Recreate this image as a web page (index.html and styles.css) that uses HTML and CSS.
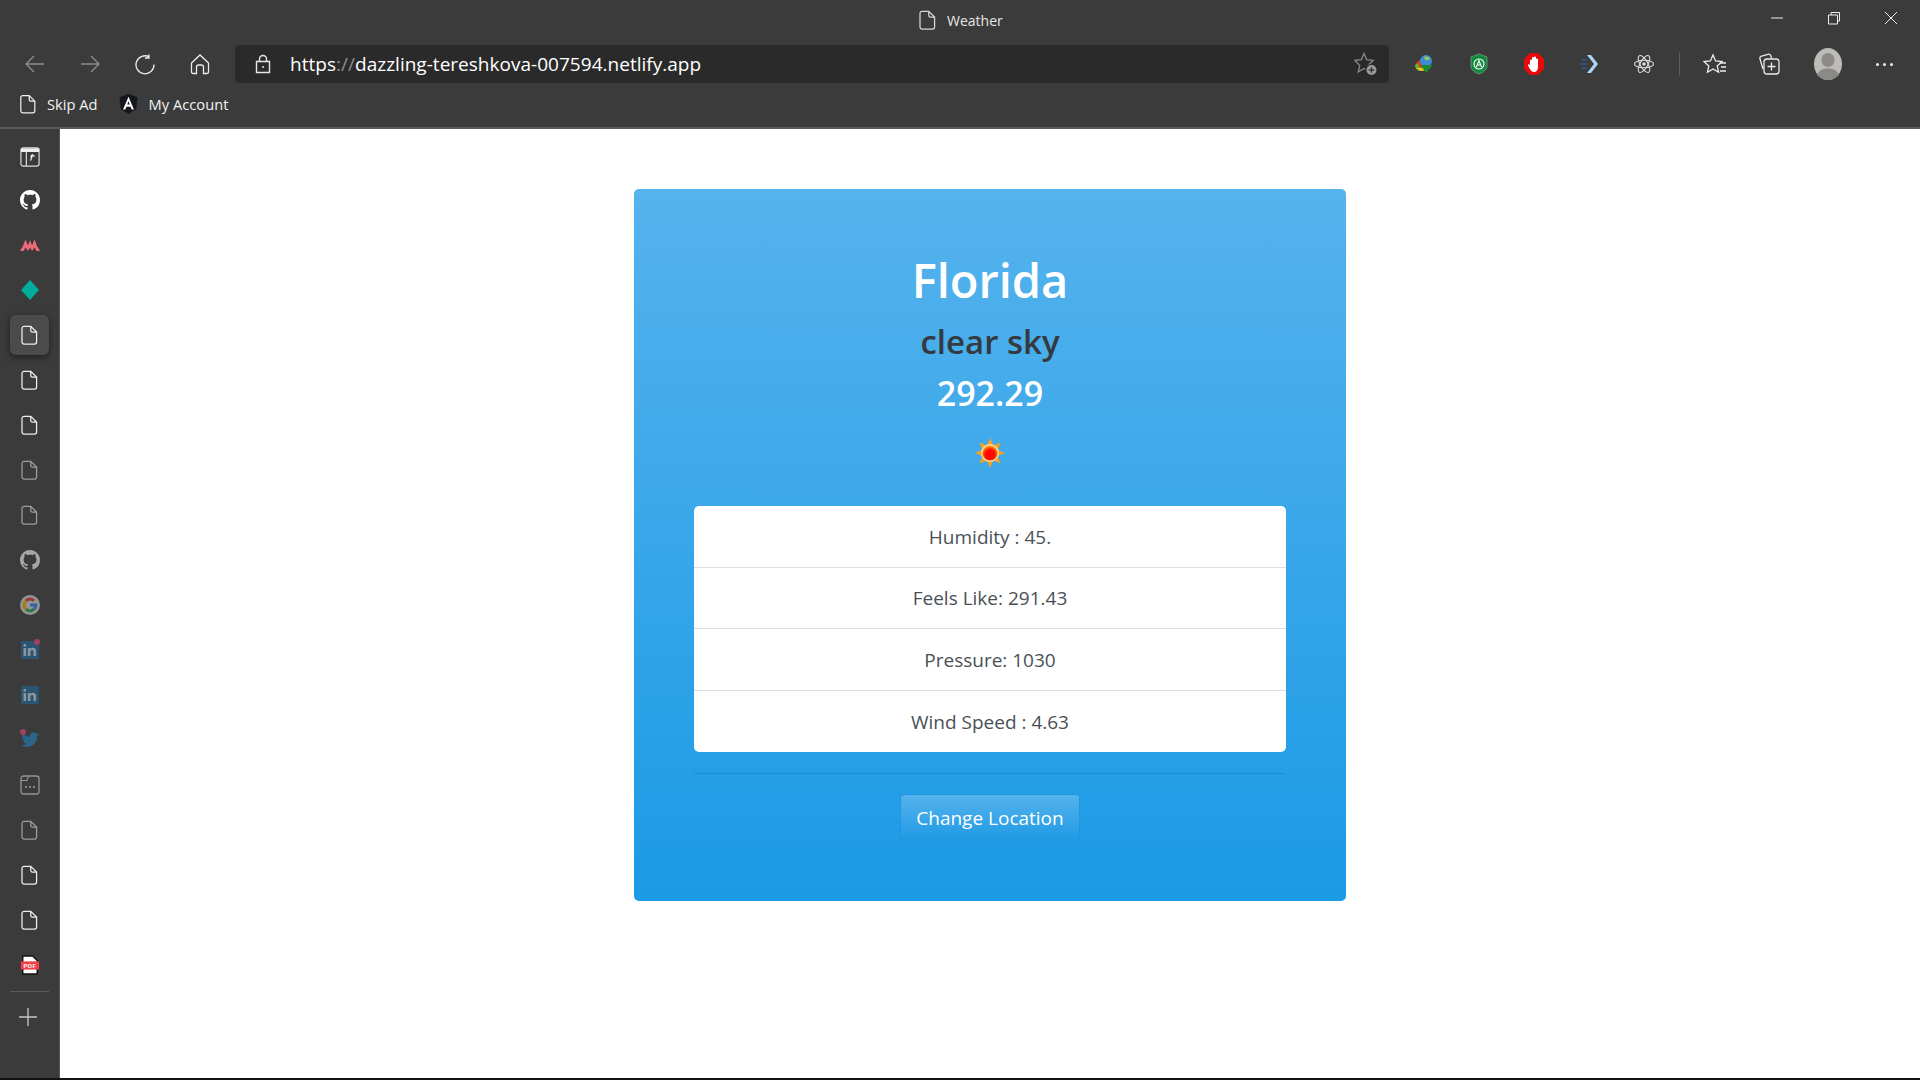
FILE: index.html
```html
<!DOCTYPE html>
<html lang="en">
<head>
<meta charset="utf-8">
<title>Weather</title>
<link rel="stylesheet" href="styles.css">
</head>
<body>
<svg class="defs" width="0" height="0">
  <defs>
    <symbol id="doc" viewBox="0 0 20 24"><path d="M3.5 1.5h8l7 7v12a2.500 2.500 0 0 1-2.500 2.500H3.500A2.500 2.500 0 0 1 1 20.500V4a2.500 2.500 0 0 1 2.500-2.500zM11.500 1.500v5a2 2 0 0 0 2 2h5" fill="none" stroke="currentColor" stroke-width="1.500"/></symbol>
    <symbol id="gh" viewBox="0 0 16 16"><path fill="currentColor" d="M8 0C3.580 0 0 3.580 0 8c0 3.540 2.290 6.530 5.470 7.590.4.070.55-.17.550-.38 0-.19-.01-.82-.01-1.490-2.010.37-2.530-.49-2.690-.94-.09-.23-.48-.94-.82-1.130-.28-.15-.68-.52-.01-.53.630-.01 1.080.58 1.230.82.720 1.210 1.870.87 2.330.66.070-.52.280-.87.510-1.070-1.780-.2-3.640-.89-3.640-3.950 0-.87.310-1.590.820-2.150-.08-.2-.36-1.020.08-2.120 0 0 .67-.21 2.200.82.640-.18 1.320-.27 2-.27s1.360.09 2 .27c1.530-1.040 2.200-.82 2.200-.82.44 1.100.160 1.920.08 2.120.51.560.82 1.270.82 2.150 0 3.070-1.870 3.750-3.650 3.950.29.250.54.730.54 1.480 0 1.070-.01 1.930-.01 2.200 0 .21.150.46.550.38A8.010 8.010 0 0 0 16 8c0-4.420-3.580-8-8-8z"/></symbol>
    <symbol id="li" viewBox="0 0 18 18"><rect width="18" height="18" fill="#1b6aa0"/><path fill="#cde" d="M2.500 7h2.600v8H2.500zM3.800 2.800a1.500 1.500 0 1 1 0 3 1.500 1.500 0 0 1 0-3zM6.800 7h2.500v1.100c.5-.8 1.400-1.300 2.600-1.300 2.400 0 3.200 1.500 3.200 3.900V15H12.500v-3.800c0-1.100-.2-2.100-1.400-2.100s-1.700 1-1.700 2.100V15H6.800z"/></symbol>
    <radialGradient id="sunfill" cx="50%" cy="60%" r="55%"><stop offset="0" stop-color="#ff0000"/><stop offset=".6" stop-color="#ff1000"/><stop offset="1" stop-color="#ffa000"/></radialGradient>
  </defs>
</svg>
<div class="app">
  <header class="chrome">
    <div class="titlebar">
      <div class="title">
        <svg class="title-doc"><use href="#doc"/></svg>
        <span>Weather</span>
      </div>
      <div class="winctl">
        <svg class="win" viewBox="0 0 14 14"><path d="M1 7h12" stroke="currentColor" fill="none"/></svg>
        <svg class="win" viewBox="0 0 14 14"><path d="M1.500 4h9v9h-9zM4 4V1.500h8.500V10H10.500" stroke="currentColor" fill="none"/></svg>
        <svg class="win" viewBox="0 0 14 14"><path d="M1 1l12 12M13 1L1 13" stroke="currentColor" fill="none"/></svg>
      </div>
    </div>
    <div class="navbar">
      <div class="navbtns">
        <svg class="nav dim" viewBox="0 0 22 22"><path d="M20 11H2M10 3l-8 8 8 8" fill="none" stroke="currentColor" stroke-width="1.300"/></svg>
        <svg class="nav dim" viewBox="0 0 22 22"><path d="M2 11h18M12 3l8 8-8 8" fill="none" stroke="currentColor" stroke-width="1.300"/></svg>
        <svg class="nav" viewBox="0 0 22 22"><path d="M15.500 3.500A9 9 0 1 0 20 11M15 1v3.500h-4" fill="none" stroke="currentColor" stroke-width="1.300" transform="translate(0 .5)"/></svg>
        <svg class="nav" viewBox="0 0 22 22"><path d="M2.500 10 11 2l8.500 8v9a1.500 1.500 0 0 1-1.500 1.500h-3.500V14a2 2 0 0 0-2-2h-3a2 2 0 0 0-2 2v6.500H4A1.500 1.500 0 0 1 2.500 19z" fill="none" stroke="currentColor" stroke-width="1.300"/></svg>
      </div>
      <div class="address">
        <svg class="lock" viewBox="0 0 16 20"><path d="M1.500 7.500h13v11h-13zM4.500 7.500V5a3.500 3.500 0 0 1 7 0v2.500" fill="none" stroke="currentColor" stroke-width="1.400"/><circle cx="8" cy="13" r="1" fill="currentColor"/></svg>
        <span class="url">https<span class="url-dim">://</span>dazzling-tereshkova-007594.netlify.app</span>
        <svg class="favadd" viewBox="0 0 24 24"><path d="M10 1.500l2.700 6.200 6.500.7-4.900 4.500 1.400 6.500L10 16.500l-5.700 3.400 1.400-6.500L.8 8.400l6.500-.7z" fill="none" stroke="#8a8a8a" stroke-width="1.300"/><circle cx="17.500" cy="18" r="6.200" fill="#2a2a2a"/><circle cx="17.500" cy="18" r="5" fill="#9a9a9a"/><path d="M17.500 15.300v5.400M14.800 18h5.400" stroke="#333" stroke-width="1.300"/></svg>
      </div>
      <div class="tools">
        <svg class="ext" viewBox="0 0 22 22"><path d="M3 12a6 6 0 0 1 6-5l-1 4 3 3-4 1z" fill="#d43a20"/><path d="M2 12c0 4 3 6 6 6l3-3-5-1-1-4z" fill="#6cb52c"/><path d="M4 15c2 3 5 4 8 2l-3-2z" fill="#f0c020"/><circle cx="13" cy="8" r="6" fill="#3a8ad8"/><path d="M11 4c3-1 5 0 6 2-2 2-5 2-6-2z" fill="#9cc84a"/><path d="M8 12h12l-7 8z" fill="#1f8a2c"/></svg>
        <svg class="ext" viewBox="0 0 22 22"><path d="M11 1l8 3v9c0 4-4 6.500-8 8-4-1.500-8-4-8-8V4z" fill="#12883b" stroke="#8cb79a" stroke-width=".6"/><circle cx="11" cy="11" r="5" fill="none" stroke="#fff" stroke-width="1.100"/><path d="M8.500 14 11 7.500l2.500 6.500M9.500 12h3" fill="none" stroke="#fff" stroke-width="1.100"/></svg>
        <svg class="ext" viewBox="0 0 22 22"><path d="M7 0h8l6 6v10l-6 6H7l-6-6V6z" fill="#e60a0a"/><path d="M7 13V7.500a1 1 0 0 1 2 0V11V5a1 1 0 0 1 2 0v6V4.500a1 1 0 0 1 2 0V11V6.500a1 1 0 0 1 2 0V14c0 3-1.500 5-4 5-2 0-3-1-4-3l-2-3.500c-.5-1 .8-1.800 1.500-.8z" fill="#fff"/></svg>
        <svg class="ext" viewBox="0 0 22 22"><path d="M9 2h4l7 9-7 9H9l7-9z" fill="#a9d4f5"/><path d="M3 6h6v1.500H3zM2 10.200h8v1.500H2zM3 14.500h6V16H3z" fill="#2d5a8a"/></svg>
        <svg class="ext ext-last" viewBox="0 0 22 22"><g fill="none" stroke="#ddd" stroke-width="1.100"><ellipse cx="11" cy="11" rx="9.500" ry="3.800"/><ellipse cx="11" cy="11" rx="9.500" ry="3.800" transform="rotate(60 11 11)"/><ellipse cx="11" cy="11" rx="9.500" ry="3.800" transform="rotate(120 11 11)"/></g><circle cx="11" cy="11" r="1.800" fill="#ddd"/></svg>
        <span class="tool-sep"></span>
        <svg class="tool tool-fav" viewBox="0 0 24 24"><path d="M10 2l2.600 6 6.400.6-4.800 4.300 1.400 6.400L10 16l-5.600 3.300 1.400-6.400L1 8.600 7.400 8z" transform="translate(0 1)" fill="none" stroke="currentColor" stroke-width="1.300"/><path d="M17 11h6M18 15h5M17 19h6" stroke="currentColor" stroke-width="1.300"/></svg>
        <svg class="tool" viewBox="0 0 24 24"><path d="M6 17 3 7c-.4-1.500.3-2.600 1.600-3L11 2.300c1.300-.3 2.300.2 2.800 1.500L14.500 6" fill="none" stroke="currentColor" stroke-width="1.300"/><rect x="7" y="7" width="15" height="15" rx="3" fill="none" stroke="currentColor" stroke-width="1.300"/><path d="M14.500 10.500v8M10.500 14.500h8" stroke="currentColor" stroke-width="1.300"/></svg>
        <span class="avatar"><svg viewBox="0 0 28 32"><ellipse cx="14" cy="16" rx="14" ry="16" fill="#bdbcb8"/><ellipse cx="14" cy="12" rx="6.500" ry="7" fill="#8c8a86"/><path d="M3 27c2-5 6-6.500 11-6.500S23 22 25 27c-3 3-7 5-11 5s-8-2-11-5z" fill="#8c8a86"/></svg></span>
        <span class="dots"><i></i><i></i><i></i></span>
      </div>
    </div>
    <div class="bookmarks">
      <div class="bm">
        <svg class="bm-doc"><use href="#doc"/></svg>
        <span>Skip Ad</span>
      </div>
      <div class="bm">
        <svg class="bm-ang" viewBox="0 0 20 22"><path d="M10 0l10 3.500-1.500 13L10 22l-8.500-5.500L0 3.500z" fill="#14171c"/><path d="M10 3 4 17h2.500l1.200-3h4.600l1.200 3H16zM8.700 11.500 10 8l1.300 3.500z" fill="#fff"/></svg>
        <span>My Account</span>
      </div>
    </div>
  </header>
  <div class="body">
    <nav class="rail">
      <div class="rail-item rail-first"><svg class="ri" viewBox="0 0 22 22"><rect x="1" y="1" width="20" height="20" rx="2.500" fill="none" stroke="#ddd" stroke-width="1.300"/><path d="M1 3.500h20" stroke="#eee" stroke-width="4"/><path d="M7 5v16" stroke="#ddd" stroke-width="1.300"/><path d="M11.500 15l2-5M11.500 11 13.500 8.500l2.500 2" fill="none" stroke="#fff" stroke-width="1.300"/></svg></div>
      <div class="rail-item"><svg class="ri ri-lg white"><use href="#gh"/></svg></div>
      <div class="rail-item"><svg class="ri" viewBox="0 0 20 12"><path d="M0 12l3-5 2.500-6.500L8 6.500 10 1l2 5.500L14.500.5 17 7l3 5h-3.500L14.500 8.500 12 12 10 8.500 8 12 5.500 8.500 3.500 12z" fill="#ef6a78"/></svg></div>
      <div class="rail-item"><svg class="ri ri-lg" viewBox="0 0 20 20"><path d="M10 0l9 10-9 10-9-10z" fill="#00ac9c"/></svg></div>
      <div class="rail-item rail-active"><svg class="ri-doc"><use href="#doc"/></svg></div>
      <div class="rail-item"><svg class="ri-doc"><use href="#doc"/></svg></div>
      <div class="rail-item"><svg class="ri-doc"><use href="#doc"/></svg></div>
      <div class="rail-item faded"><svg class="ri-doc"><use href="#doc"/></svg></div>
      <div class="rail-item faded"><svg class="ri-doc"><use href="#doc"/></svg></div>
      <div class="rail-item faded"><svg class="ri ri-lg white"><use href="#gh"/></svg></div>
      <div class="rail-item faded"><svg class="ri ri-lg" viewBox="0 0 20 20"><circle cx="10" cy="10" r="10" fill="#ddd"/><path d="M6 5.800A5.800 5.800 0 0 1 14 5.800" stroke="#e8392b" stroke-width="3.200" fill="none"/><path d="M6 5.800a5.800 5.800 0 0 0 0 8.400" stroke="#f7b500" stroke-width="3.200" fill="none"/><path d="M6 14.200a5.800 5.800 0 0 0 8 0" stroke="#22ab4a" stroke-width="3.200" fill="none"/><path d="M10 10h5.800a5.800 5.800 0 0 1-1.800 4.200" stroke="#3b82f6" stroke-width="3.200" fill="none"/></svg></div>
      <div class="rail-item faded"><span class="ri-wrap"><svg class="ri-li"><use href="#li"/></svg><i class="rail-dot dot-tr"></i></span></div>
      <div class="rail-item faded"><svg class="ri-li"><use href="#li"/></svg></div>
      <div class="rail-item faded"><span class="ri-wrap"><svg class="ri-li" viewBox="0 0 20 18"><path d="M20 2.500c-.7.3-1.500.5-2.300.6.800-.5 1.500-1.300 1.800-2.200-.8.500-1.700.8-2.600 1A4 4 0 0 0 10 5.500C6.700 5.300 3.700 3.700 1.700 1.200.6 3 1.200 5.400 3 6.600c-.7 0-1.300-.2-1.900-.5 0 2 1.400 3.700 3.300 4.100-.6.2-1.200.2-1.800.1.500 1.600 2 2.800 3.800 2.800A8.200 8.200 0 0 1 0 14.700 11.600 11.600 0 0 0 18 4.300c.8-.5 1.500-1.100 2-1.800z" fill="#1f88c8"/></svg><i class="rail-dot dot-tl"></i></span></div>
      <div class="rail-item faded"><svg class="ri" viewBox="0 0 20 20"><rect x="1" y="1" width="18" height="18" rx="2.500" fill="none" stroke="#ddd" stroke-width="1.300"/><path d="M1 5.500h6l1.500-4.500" fill="none" stroke="#ddd" stroke-width="1.100"/><path d="M5 12h2M9 12h2M13 12h2" stroke="#eee" stroke-width="1.500"/></svg></div>
      <div class="rail-item faded"><svg class="ri-doc"><use href="#doc"/></svg></div>
      <div class="rail-item"><svg class="ri-doc"><use href="#doc"/></svg></div>
      <div class="rail-item"><svg class="ri-doc"><use href="#doc"/></svg></div>
      <div class="rail-item"><svg class="ri" viewBox="0 0 20 22"><path d="M2 1h11l5 5v15H2z" fill="#fff" stroke="#111" stroke-width="1.600"/><rect y="7" width="20" height="9" fill="#ef3d45"/><text class="pdf-text" x="10" y="14" text-anchor="middle">PDF</text></svg></div>
      <div class="rail-sep"></div>
      <svg class="rail-plus" viewBox="0 0 18 18"><path d="M9 0v18M0 9h18" stroke="#c8c8c8" stroke-width="1.300"/></svg>
    </nav>
    <main class="page">
      <section class="card">
        <h1 class="city">Florida</h1>
        <h2 class="desc">clear sky</h2>
        <h3 class="temp">292.29</h3>
        <svg class="sun" viewBox="0 0 30 30"><g fill="#f5a21f"><path d="M15 0l3 7h-6zM15 30l3-7h-6zM0 15l7 3v-6zM30 15l-7 3v-6zM4.400 4.400l7 2.800-4.200 4.200zM25.600 4.400l-2.800 7-4.200-4.200zM4.400 25.600l2.800-7 4.200 4.200zM25.600 25.600l-7-2.800 4.200-4.200z"/></g><circle cx="15" cy="15" r="9" fill="#fbd9a8"/><circle cx="15" cy="15" r="7.600" fill="url(#sunfill)"/></svg>
        <ul class="stats">
          <li>Humidity : 45.</li>
          <li>Feels Like: 291.43</li>
          <li>Pressure: 1030</li>
          <li>Wind Speed : 4.63</li>
        </ul>
        <hr class="rule">
        <button class="change" type="button">Change Location</button>
      </section>
    </main>
  </div>
  <div class="bottomline"></div>
</div>
</body>
</html>
```

FILE: styles.css
```css
* { box-sizing: border-box; }
html, body { margin: 0; padding: 0; }
body { width: 1920px; height: 1080px; overflow: hidden; background: #3b3b3b; font-family: "Open Sans", "Noto Sans", "Liberation Sans", sans-serif; color: #fff; }
.defs { position: absolute; }
.app { display: flex; flex-direction: column; height: 1080px; }

.chrome { height: 129px; flex: none; background: #3b3b3b; border-bottom: 2px solid #5a5a5a; }
.titlebar { height: 40px; display: flex; justify-content: flex-end; position: relative; }
.title { position: absolute; left: 919px; top: 10px; display: flex; align-items: center; gap: 11px; font-size: 14px; color: #e6e6e6; }
.title-doc { width: 17px; height: 20px; color: #d8d8d8; }
.winctl { display: flex; gap: 43px; padding: 11px 22px 0 0; }
.win { width: 14px; height: 14px; color: #eee; }

.navbar { height: 48px; display: flex; align-items: center; }
.navbtns { width: 235px; display: flex; gap: 33px; padding-left: 24px; flex: none; }
.nav { width: 22px; height: 22px; color: #ececec; flex: none; }
.nav.dim { color: #8e8e8e; }
.address { width: 1154px; height: 38px; background: #2a2a2a; border-radius: 4px; display: flex; align-items: center; padding: 0 11px 0 20px; flex: none; }
.lock { width: 16px; height: 20px; color: #e6e6e6; flex: none; }
.url { margin-left: 19px; font-size: 19px; color: #fff; flex: 1; white-space: nowrap; letter-spacing: .02px; }
.url-dim { color: #8d8d8d; }
.favadd { width: 24px; height: 24px; flex: none; }
.tools { display: flex; align-items: center; padding-left: 24px; }
.ext { width: 22px; height: 22px; margin-right: 33px; flex: none; }
.ext-last { margin-right: 24px; }
.tool-sep { width: 1px; height: 24px; background: #5c5c5c; margin-right: 23px; flex: none; }
.tool { width: 24px; height: 24px; color: #ececec; margin-right: 33px; flex: none; }
.tool-fav { margin-right: 30px; }
.avatar { width: 28px; height: 32px; margin-right: 34px; flex: none; }
.avatar svg { display: block; width: 28px; height: 32px; }
.dots { display: flex; gap: 4px; }
.dots i { width: 3px; height: 3px; border-radius: 50%; background: #f0f0f0; }

.bookmarks { height: 32px; display: flex; gap: 21px; padding-left: 20px; align-items: center; font-size: 14.700px; color: #f2f2f2; }
.bm { display: flex; align-items: center; gap: 11px; }
.bm-doc { width: 16px; height: 20px; color: #f0f0f0; }
.bm-ang { width: 19px; height: 20px; }

.body { flex: 1; display: flex; min-height: 0; }
.rail { width: 60px; flex: none; background: #3b3b3b; border-right: 1px solid #555; display: flex; flex-direction: column; align-items: center; padding-top: 7px; position: relative; }
.rail-item { width: 39px; height: 45px; display: flex; align-items: center; justify-content: center; flex: none; }
.rail-first { height: 41px; }
.rail-active { height: 40px; margin: 2.500px 0; background: #4b4b4b; border-radius: 6px; box-shadow: 0 2px 6px rgba(0,0,0,.5); }
.faded { opacity: .55; }
.ri { width: 20px; height: 20px; }
.ri-lg { width: 20px; height: 20px; }
.white { color: #fff; }
.ri-doc { width: 17px; height: 20px; color: #eee; }
.ri-li { width: 18px; height: 18px; display: block; }
.ri-wrap { position: relative; display: block; }
.rail-dot { position: absolute; width: 6px; height: 6px; border-radius: 50%; background: #f0487a; }
.dot-tr { top: -2px; right: -1px; }
.dot-tl { top: -2px; left: -1px; }
.pdf-text { font-size: 6.500px; font-weight: 700; fill: #fff; font-family: "Liberation Sans", sans-serif; letter-spacing: .4px; }
.rail-sep { width: 39px; height: 1px; background: #5c5c5c; margin-top: 4px; flex: none; }
.rail-plus { width: 18px; height: 18px; margin-top: 16px; margin-right: 4px; flex: none; }

.page { flex: 1; background: #fff; padding-top: 60px; display: flex; justify-content: center; align-items: flex-start; }
.card { width: 712px; height: 712px; border-radius: 5px; background: linear-gradient(#55b3ed, #1b9ae6); padding: 61px 60px 60px; display: flex; flex-direction: column; align-items: center; }
.city { margin: 0; font-size: 47px; font-weight: 600; line-height: 60px; color: #fff; }
.desc { margin: 11px 0 0; font-size: 33px; font-weight: 600; line-height: 42px; color: #343a40; }
.temp { margin: 9px 0 0; font-size: 34px; font-weight: 600; line-height: 42px; color: #fff; }
.sun { width: 30px; height: 30px; margin: 24px 0 0; flex: none; }
.stats { list-style: none; margin: 38px 0 0; padding: 0; width: 592px; background: #fff; border-radius: 5px; overflow: hidden; }
.stats li { height: 61.500px; display: flex; align-items: center; justify-content: center; font-size: 19px; color: #495057; border-bottom: 1px solid #dcdfe2; padding-top: 1px; }
.stats li:last-child { border-bottom: 0; }
.rule { width: 592px; margin: 21px 0 0; border: 0; border-top: 1px solid rgba(0,0,0,.12); }
.change { margin-top: 20px; width: 180px; height: 47px; border: 1px solid #2196dc; border-radius: 4px; background: linear-gradient(#55b3ed, #1f9ae4); color: #fff; font: inherit; font-size: 19px; padding: 0; }
.bottomline { height: 2px; background: #111; flex: none; }
```
